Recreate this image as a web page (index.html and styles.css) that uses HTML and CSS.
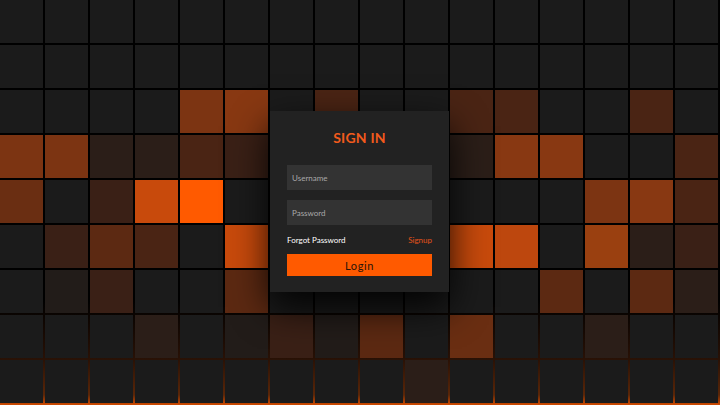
FILE: index.html
```html
<!DOCTYPE html>
<html lang="en">
<head>
<meta charset="utf-8">
<title>Sign In</title>
<link rel="stylesheet" href="styles.css">
</head>
<body>
<section class="stage">
  <div class="grid">
    <span class="d"></span><span class="d"></span><span class="d"></span><span class="d"></span><span class="d"></span><span class="d"></span><span class="d"></span><span class="d"></span><span class="d"></span><span class="d"></span><span class="d"></span><span class="d"></span><span class="d"></span><span class="d"></span><span class="d"></span><span class="d"></span>
    <span class="d"></span><span class="d"></span><span class="d"></span><span class="d"></span><span class="d"></span><span class="d"></span><span class="d"></span><span class="d"></span><span class="d"></span><span class="d"></span><span class="d"></span><span class="d"></span><span class="d"></span><span class="d"></span><span class="d"></span><span class="d"></span>
    <span class="d"></span><span class="d"></span><span class="d"></span><span class="d"></span><span class="y"></span><span class="z"></span><span class="d"></span><span class="w"></span><span class="d"></span><span class="d"></span><span class="w"></span><span class="w"></span><span class="d"></span><span class="d"></span><span class="w"></span><span class="d"></span>
    <span class="y"></span><span class="y"></span><span class="u"></span><span class="u"></span><span class="w"></span><span class="v"></span><span class="d"></span><span class="d"></span><span class="d"></span><span class="d"></span><span class="u"></span><span class="z"></span><span class="z"></span><span class="d"></span><span class="d"></span><span class="w"></span>
    <span class="x2"></span><span class="d"></span><span class="v"></span><span class="r"></span><span class="s"></span><span class="d"></span><span class="d"></span><span class="d"></span><span class="d"></span><span class="d"></span><span class="d"></span><span class="d"></span><span class="d"></span><span class="y"></span><span class="z"></span><span class="w"></span>
    <span class="d"></span><span class="v"></span><span class="x"></span><span class="w"></span><span class="d"></span><span class="r"></span><span class="d"></span><span class="d"></span><span class="d"></span><span class="d"></span><span class="r"></span><span class="r2"></span><span class="d"></span><span class="q"></span><span class="u"></span><span class="v"></span>
    <span class="d"></span><span class="t"></span><span class="v"></span><span class="d"></span><span class="d"></span><span class="x"></span><span class="d"></span><span class="d"></span><span class="d"></span><span class="d"></span><span class="d"></span><span class="d"></span><span class="x"></span><span class="d"></span><span class="x"></span><span class="u"></span>
    <span class="d"></span><span class="d"></span><span class="d"></span><span class="u"></span><span class="d"></span><span class="t"></span><span class="v"></span><span class="t"></span><span class="x"></span><span class="d"></span><span class="x2"></span><span class="d"></span><span class="d"></span><span class="u"></span><span class="d"></span><span class="d"></span>
    <span class="d"></span><span class="d"></span><span class="d"></span><span class="d"></span><span class="d"></span><span class="d"></span><span class="d"></span><span class="d"></span><span class="d"></span><span class="u"></span><span class="d"></span><span class="d"></span><span class="d"></span><span class="d"></span><span class="d"></span><span class="d"></span>
  </div>

  <div class="signin">
    <h2 class="title">SIGN IN</h2>
    <form class="form">
      <input class="field" type="text" placeholder="Username">
      <input class="field" type="password" placeholder="Password">
      <div class="links">
        <a href="#" class="forgot">Forgot Password</a>
        <a href="#" class="signup">Signup</a>
      </div>
      <button type="button" class="login">Login</button>
    </form>
  </div>
</section>
</body>
</html>
```

FILE: styles.css
```css
* {
  box-sizing: border-box;
  margin: 0;
  padding: 0;
}

html, body {
  width: 720px;
  height: 405px;
  overflow: hidden;
  background: #000;
}

body {
  font-family: Lato, "Noto Sans", sans-serif;
}

.stage {
  position: relative;
  width: 720px;
  height: 405px;
  background: linear-gradient(to bottom, #000 0, #000 300px, #2a1206 360px, #5a2608 395px, #d04a00 405px);
}

.grid {
  display: grid;
  grid-template-columns: repeat(16, 43px);
  grid-auto-rows: 43px;
  gap: 2px;
}

.grid span { display: block; }

.d  { background: #1b1b1b; }
.t  { background: #221c19; }
.u  { background: #2b1e18; }
.v  { background: #3a2016; }
.w  { background: #4a2414; }
.x  { background: #5c2912; }
.x2 { background: #6a2e12; }
.y  { background: #7c3412; }
.z  { background: #883812; }
.q  { background: #9a4010; }
.r  { background: #c84a0c; }
.r2 { background: #bd470e; }
.s  { background: #ff5a00; }

.signin {
  position: absolute;
  left: 270px;
  top: 111px;
  width: 179px;
  height: 181px;
  background: #222;
  box-shadow: 0 15px 35px rgba(0, 0, 0, 0.9);
  padding: 17px 17px 16px 17px;
  display: flex;
  flex-direction: column;
}

.title {
  height: 20px;
  line-height: 20px;
  text-align: center;
  font-size: 14px;
  font-weight: 700;
  color: #f25a1c;
  letter-spacing: 0.2px;
  margin-bottom: 17px;
}

.form {
  display: flex;
  flex-direction: column;
}

.field {
  height: 25px;
  border: none;
  outline: none;
  background: #333;
  color: #fff;
  font-family: Lato, "Noto Sans", sans-serif;
  font-size: 8px;
  padding: 0 5px;
}

.field + .field {
  margin-top: 10px;
}

.field::placeholder {
  color: #a8a8a8;
}

.links {
  height: 29px;
  display: flex;
  justify-content: space-between;
  align-items: center;
  font-size: 8px;
}

.links a {
  text-decoration: none;
}

.forgot { color: #fff; }
.signup { color: #e5521a; }

.login {
  height: 22px;
  border: none;
  background: #ff5a00;
  color: #2a1408;
  font-family: Lato, "Noto Sans", sans-serif;
  font-size: 11px;
  letter-spacing: 0.6px;
  cursor: pointer;
}
```
